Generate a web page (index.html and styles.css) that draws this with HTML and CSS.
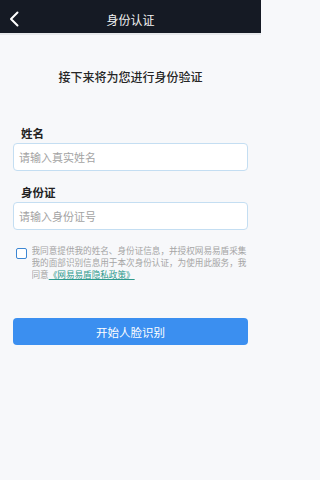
FILE: index.html
```html
<!DOCTYPE html>
<html lang="zh-CN">
<head>
<meta charset="utf-8">
<meta name="viewport" content="width=device-width, initial-scale=1">
<title>身份认证</title>
<link rel="stylesheet" href="styles.css">
</head>
<body>
<div class="header">
  <span class="back">
    <svg width="12" height="16" viewBox="0 0 12 16"><path d="M9.5 1.5 L3 8 L9.5 14.5" fill="none" stroke="#fff" stroke-width="2" stroke-linecap="round" stroke-linejoin="round"/></svg>
  </span>
  <span class="header-title">身份认证</span>
</div>
<div class="content">
  <div class="intro">接下来将为您进行身份验证</div>
  <div class="form">
    <div class="label label-first">姓名</div>
    <div class="input">请输入真实姓名</div>
    <div class="label">身份证</div>
    <div class="input">请输入身份证号</div>
    <div class="agree">
      <span class="check"></span>
      <div class="agree-text">
        <div class="line">我同意提供我的姓名、身份证信息，并授权网易易盾采集</div>
        <div class="line">我的面部识别信息用于本次身份认证，为使用此服务，我</div>
        <div class="line"><span>同意</span><span class="link">《网易易盾隐私政策》</span></div>
      </div>
    </div>
    <div class="button">开始人脸识别</div>
  </div>
</div>
</body>
</html>
```
FILE: styles.css
```css
html, body {
  margin: 0;
  padding: 0;
}
html {
  background: #f7f8fa;
}
body {
  background: #f7f8fa;
  font-family: "Noto Sans CJK SC", "Noto Sans", sans-serif;
  width: 261px;
  min-height: 480px;
}
.header {
  height: 33px;
  background: #151a24;
  border-bottom: 2px solid #e6e8eb;
  display: flex;
  align-items: center;
  justify-content: center;
  position: relative;
}
.back {
  position: absolute;
  left: 8px;
  top: 11px;
  width: 12px;
  height: 16px;
  display: flex;
}
.header-title {
  color: #f2f2f2;
  font-size: 12px;
  line-height: 16px;
  margin-top: 6px;
}
.content {
  display: flex;
  flex-direction: column;
}
.intro {
  margin-top: 34px;
  text-align: center;
  font-size: 12px;
  line-height: 16px;
  font-weight: 500;
  color: #262626;
}
.form {
  padding: 0 13px;
  display: flex;
  flex-direction: column;
}
.label {
  margin-top: 13px;
  padding-left: 8px;
  font-size: 11.5px;
  line-height: 16px;
  font-weight: 700;
  color: #222;
}
.label-first {
  margin-top: 40px;
}
.input {
  margin-top: 2px;
  height: 28px;
  box-sizing: border-box;
  border: 1px solid #c4def2;
  border-radius: 4px;
  background: #fff;
  padding-left: 5px;
  display: flex;
  align-items: center;
  font-size: 11px;
  color: #a3a3a3;
}
.agree {
  margin-top: 14px;
  display: flex;
  align-items: flex-start;
}
.check {
  flex: none;
  width: 11px;
  height: 11px;
  box-sizing: border-box;
  border: 1.5px solid #3d87d3;
  border-radius: 2px;
  background: #fff;
  margin: 4px 0 0 2.5px;
}
.agree-text {
  margin-left: 5px;
  width: 216px;
  font-size: 8.6px;
  color: #a5a5a5;
  display: flex;
  flex-direction: column;
}
.line {
  height: 12px;
  line-height: 12px;
  white-space: nowrap;
  overflow: hidden;
}
.link {
  color: #2f9a8e;
  text-decoration: underline;
}
.button {
  margin-top: 38px;
  height: 27px;
  border-radius: 4px;
  background: #3b8ff0;
  color: #fff;
  font-size: 11.5px;
  display: flex;
  align-items: center;
  justify-content: center;
}
```
